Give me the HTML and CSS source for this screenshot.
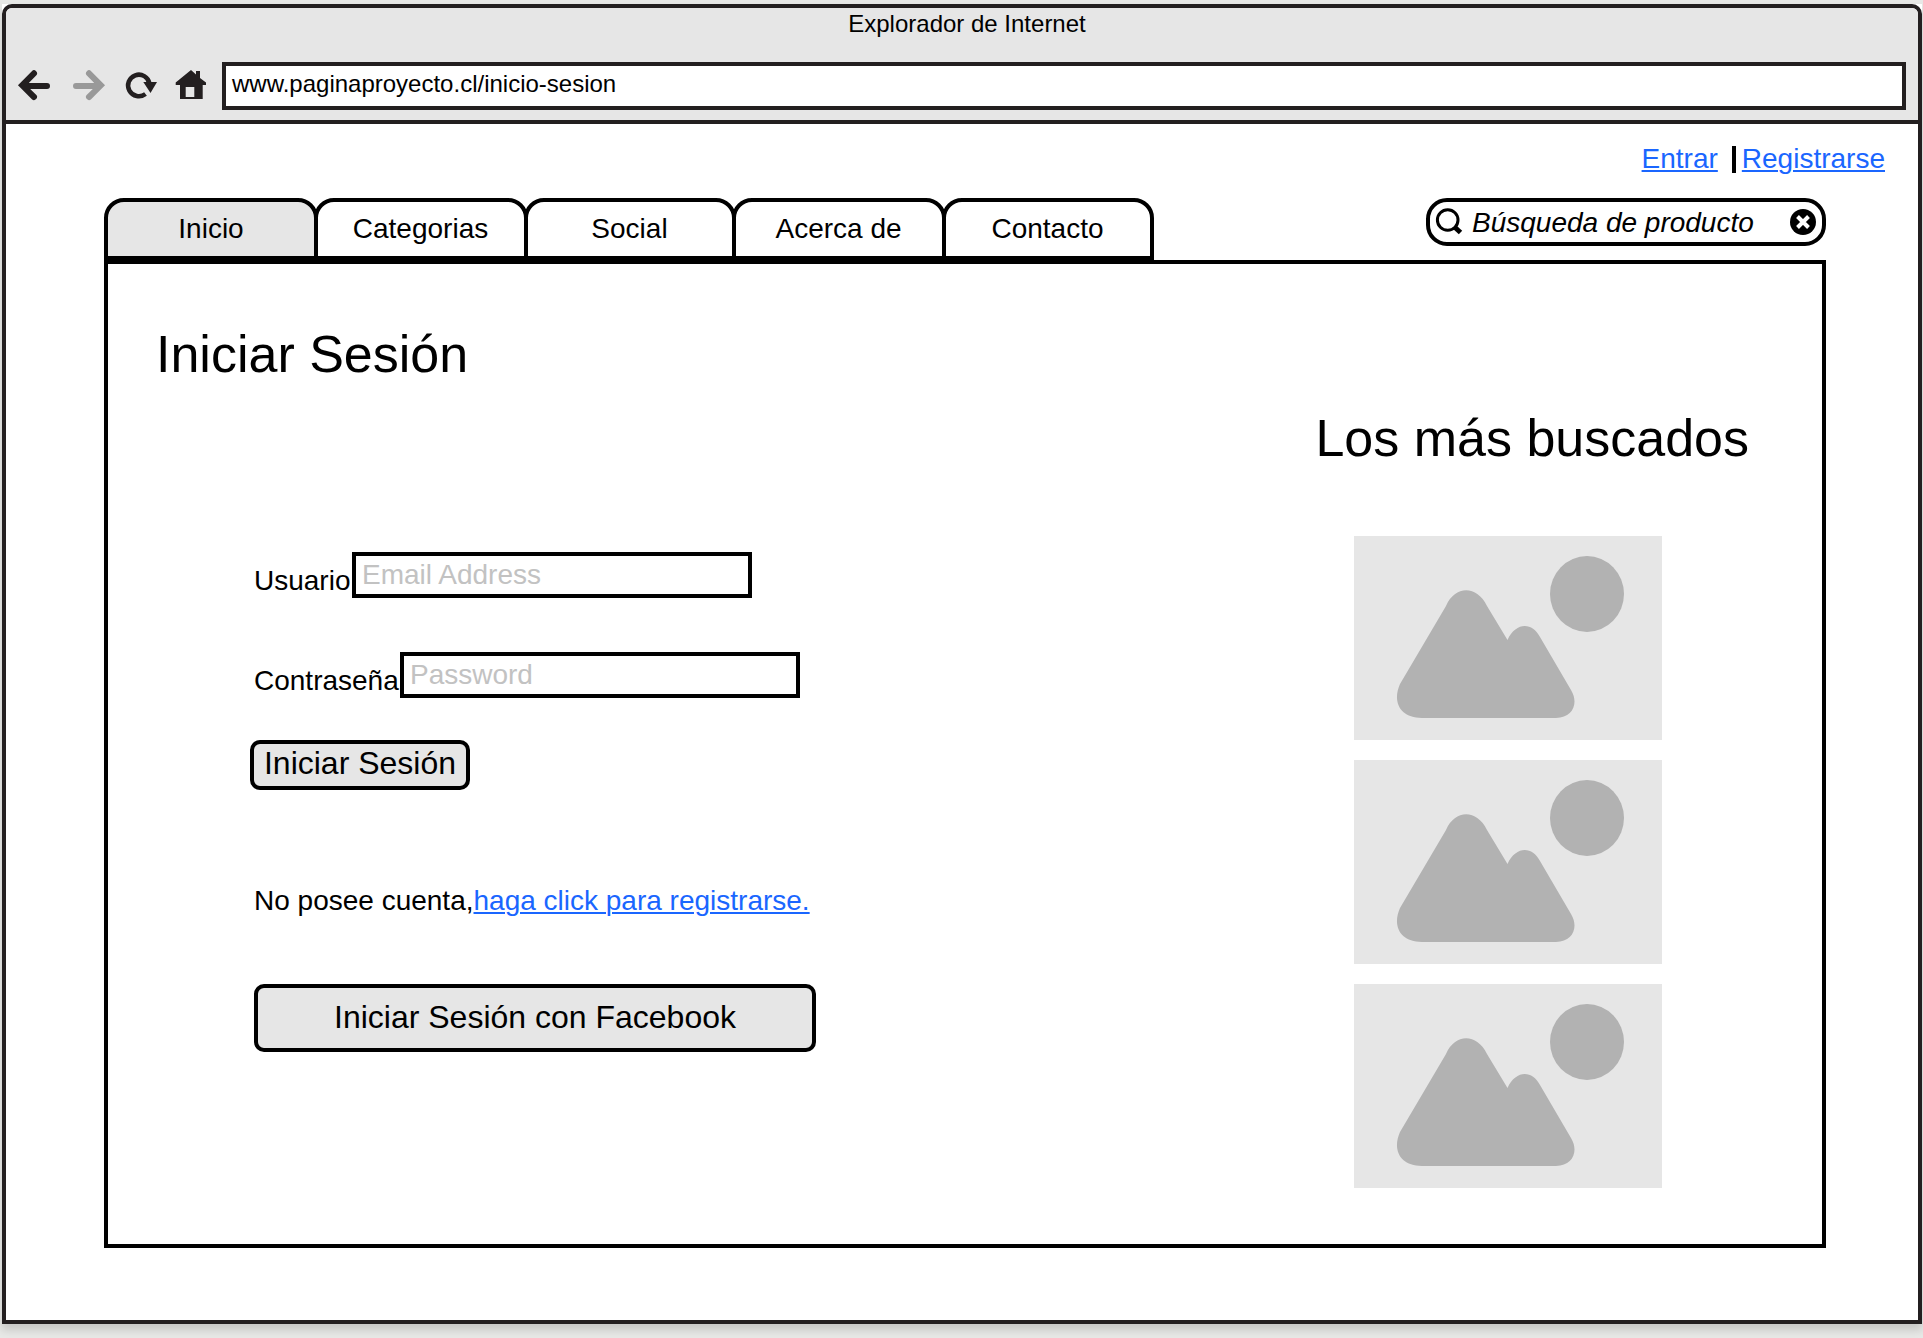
FILE: index.html
```html
<!DOCTYPE html>
<html lang="es">
<head>
<meta charset="utf-8">
<title>Explorador de Internet</title>
<link rel="stylesheet" href="styles.css">
</head>
<body>
<svg width="0" height="0" class="defs">
  <symbol id="picture" viewBox="0 0 308 204">
    <path d="M92 70C101 49 123 49 133 70L153.500 104C162 86 178 86 186 101L217 154C225 167 219 182 202 182H68C46 182 38 166 46 148Z"/>
    <ellipse cx="233" cy="58" rx="37" ry="38"/>
  </symbol>
</svg>
<div class="frame">
<div class="window">
  <header class="chrome">
    <div class="title">Explorador de Internet</div>
    <div class="toolbar">
      <svg class="nav-icons" width="216" height="48" viewBox="0 0 216 48">
        <g fill="none" stroke="#231f20" stroke-width="6" stroke-linecap="round" stroke-linejoin="miter">
          <path d="M28 11.300L16.200 23.300L28 35M18 24H41"/>
          <path stroke="#999" d="M83 11.300L94.800 23.300L83 35M93 24H70"/>
          <path stroke-width="4.500" stroke-linecap="butt" d="M139.500 32A10.800 10.800 0 1 1 143.500 21.500"/>
        </g>
        <g fill="#231f20">
          <path d="M137.300 20H151L144.500 31Z"/>
          <path fill-rule="evenodd" d="M185 8L190 12.500V9H194V16L200 20.500V23H196.700V37H174V23H169.700V20.500ZM179.700 25V35H188.300V25Z"/>
        </g>
      </svg>
      <div class="address">www.paginaproyecto.cl/inicio-sesion</div>
    </div>
  </header>
  <main class="page">
    <div class="account">
      <a href="#">Entrar</a><span class="bar"></span><a href="#">Registrarse</a>
    </div>
    <div class="menu">
      <nav class="tabs">
        <a class="tab active">Inicio</a>
        <a class="tab">Categorias</a>
        <a class="tab">Social</a>
        <a class="tab">Acerca de</a>
        <a class="tab">Contacto</a>
      </nav>
      <div class="search">
        <svg width="32" height="32" viewBox="0 0 32 32"><circle cx="13.700" cy="14" r="10.300" fill="none" stroke="#000" stroke-width="3"/><path d="M20.500 21L26.500 26.500" stroke="#000" stroke-width="5"/></svg>
        <span class="query">Búsqueda de producto</span>
        <svg width="26" height="26" viewBox="0 0 26 26"><circle cx="13" cy="13" r="13"/><path d="M7.500 7.500L18.500 18.500M18.500 7.500L7.500 18.500" stroke="#fff" stroke-width="4"/></svg>
      </div>
    </div>
    <section class="panel">
      <div class="login">
        <h1>Iniciar Sesión</h1>
        <form class="form">
          <label class="field"><span class="label user">Usuario</span><span class="input">Email Address</span></label>
          <label class="field"><span class="label pass">Contraseña</span><span class="input">Password</span></label>
          <button type="button" class="button submit">Iniciar Sesión</button>
          <p class="signup">No posee cuenta,<a href="#">haga click para registrarse.</a></p>
          <button type="button" class="button facebook">Iniciar Sesión con Facebook</button>
        </form>
      </div>
      <aside class="popular">
        <h2>Los más buscados</h2>
        <div class="pictures">
          <svg class="picture"><use href="#picture"/></svg>
          <svg class="picture"><use href="#picture"/></svg>
          <svg class="picture"><use href="#picture"/></svg>
        </div>
      </aside>
    </section>
  </main>
</div>
</div>
</body>
</html>
```
FILE: styles.css
```css
* { box-sizing: border-box; }

body {
  margin: 0;
  height: 1338px;
  padding: 4px 1px 14px 2px;
  overflow: hidden;
  background: #e7e8e6;
  color: #000;
  font: 28px/32px "Liberation Sans", Arial, sans-serif;
}

.defs { position: absolute; }

a { color: #1a66ff; text-underline-offset: 2px; text-decoration-thickness: 2px; text-decoration-skip-ink: auto; }

.frame {
  width: 1920px;
  background: #fff;
  box-shadow: 0 6px 8px rgba(0, 0, 0, .14);
}

.window {
  height: 1320px;
  border: 4px solid #231f20;
  border-radius: 10px 10px 0 0;
  background: #fff;
  overflow: hidden;
}

.chrome {
  height: 116px;
  border-bottom: 4px solid #231f20;
  background: #e6e6e6;
  font-size: 24px;
}

.title { height: 54px; padding-left: 10px; line-height: 32px; text-align: center; }

.toolbar { display: flex; height: 48px; }

.nav-icons { display: block; flex: none; }

.address {
  width: 1684px;
  border: 4px solid #231f20;
  padding-left: 6px;
  background: #fff;
  line-height: 35px;
}

.account {
  display: flex;
  justify-content: flex-end;
  height: 74px;
  padding: 19px 33px 0 0;
}

.bar { width: 4px; height: 27px; margin: 3px 6px 0 14px; background: #000; }

.menu {
  display: flex;
  justify-content: space-between;
  align-items: flex-start;
  width: 1722px;
  height: 62px;
  margin-left: 98px;
}

.tabs { display: flex; height: 62px; }

.tab {
  width: 214px;
  border: 4px solid #000;
  border-radius: 20px 20px 0 0;
  text-align: center;
  line-height: 54px;
  color: #000;
}

.tab:nth-child(3), .tab:last-child { width: 212px; }
.tab + .tab { margin-left: -4px; padding-right: 1px; }
.tab.active { background: #e6e6e6; }

.search {
  display: flex;
  align-items: center;
  width: 400px;
  height: 48px;
  border: 4px solid #000;
  border-radius: 21px;
  padding: 0 6px 0 4px;
}

.query { flex: 1; padding-left: 6px; font-style: italic; line-height: 40px; padding-top: 1px; white-space: nowrap; }

.panel {
  display: flex;
  justify-content: space-between;
  width: 1722px;
  height: 988px;
  margin-left: 98px;
  border: 4px solid #000;
  padding: 60px 73px 0 48px;
}

h1, h2 { margin: 0; font-size: 52px; line-height: 60px; font-weight: 400; white-space: nowrap; }

.form { padding: 168px 0 0 94px; }

.field { display: flex; height: 46px; margin-left: 4px; margin-bottom: 54px; }

.label { line-height: 58px; }
.label.user { width: 98px; }
.label.pass { width: 146px; }

.input { width: 400px; border: 4px solid #000; padding-left: 6px; color: #c2c2c2; line-height: 38px; }

.button {
  display: block;
  border: 4px solid #000;
  border-radius: 10px;
  padding: 0;
  background: #e6e6e6;
  color: #000;
  font: 32px/37px "Liberation Sans", Arial, sans-serif;
  text-align: center;
}

.submit { width: 220px; height: 50px; margin-top: -12px; padding-bottom: 4px; }

.signup { margin: 95px 0 67px 4px; line-height: 32px; }

.facebook { width: 562px; height: 68px; margin-left: 4px; padding-bottom: 2px; }

.popular { padding-top: 84px; }

.pictures { display: flex; flex-direction: column; gap: 20px; margin: 68px 0 0 39px; }

.picture { display: block; width: 308px; height: 204px; background: #e6e6e6; fill: #b2b2b2; }
```
